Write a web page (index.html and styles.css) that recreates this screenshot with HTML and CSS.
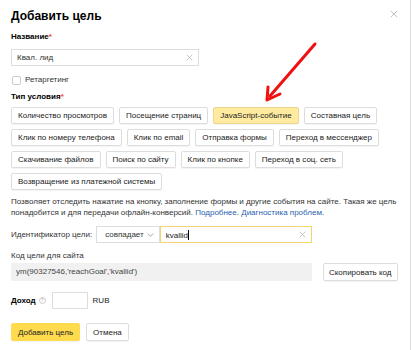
FILE: index.html
```html
<!DOCTYPE html>
<html lang="ru">
<head>
  <meta charset="UTF-8" />
  <title>Добавить цель</title>
  <link rel="stylesheet" href="styles.css">
</head>
<body>
  <div class="dialog">
    <button class="close-btn" aria-label="Закрыть">
      <svg viewBox="0 0 10 10"><path d="M1 1l8 8M9 1l-8 8"/></svg>
    </button>
    <h1>Добавить цель</h1>

    <div class="label">Название<span class="req">*</span></div>
    <div class="input name-input">
      <span>Квал. лид</span>
      <svg class="clear" viewBox="0 0 10 10"><path d="M1 1l8 8M9 1l-8 8"/></svg>
    </div>

    <label class="check"><span class="box"></span>Ретаргетинг</label>

    <div class="label type-label">Тип условия<span class="req">*</span></div>
    <div class="types">
      <button class="btn">Количество просмотров</button>
      <button class="btn">Посещение страниц</button>
      <button class="btn active">JavaScript-событие</button>
      <button class="btn">Составная цель</button>
      <button class="btn">Клик по номеру телефона</button>
      <button class="btn">Клик по email</button>
      <button class="btn">Отправка формы</button>
      <button class="btn">Переход в мессенджер</button>
      <button class="btn">Скачивание файлов</button>
      <button class="btn">Поиск по сайту</button>
      <button class="btn">Клик по кнопке</button>
      <button class="btn">Переход в соц. сеть</button>
      <button class="btn">Возвращение из платежной системы</button>
    </div>

    <p class="hint">Позволяет отследить нажатие на кнопку, заполнение формы и другие события на сайте. Такая же цель<br>понадобится и для передачи офлайн-конверсий. <a href="#">Подробнее</a>. <a href="#">Диагностика проблем</a>.</p>

    <div class="id-row">
      <span class="id-label">Идентификатор цели:</span>
      <div class="select">совпадает <svg viewBox="0 0 10 6"><path d="M1 1l4 4 4-4"/></svg></div>
      <div class="input id-input">
        <span>kvallid<i class="caret"></i></span>
        <svg class="clear" viewBox="0 0 10 10"><path d="M1 1l8 8M9 1l-8 8"/></svg>
      </div>
    </div>

    <div class="sub">Код цели для сайта</div>
    <div class="code-row">
      <div class="code">ym(90327546,'reachGoal','kvallid')</div>
      <button class="btn">Скопировать код</button>
    </div>

    <div class="income">
      <b>Доход</b>
      <span class="q">?</span>
      <div class="input small-input"></div>
      <span>RUB</span>
    </div>

    <div class="actions">
      <button class="btn primary">Добавить цель</button>
      <button class="btn">Отмена</button>
    </div>
  </div>

  <svg class="arrow" viewBox="0 0 412 350">
    <path d="M315 44 L270 96" />
    <path d="M267 100 L268 87 M267 100 L280 94" />
  </svg>
</body>
</html>
```

FILE: styles.css
```css
body {
  margin: 0;
  background: #fff;
  font-family: 'Liberation Sans', Arial, sans-serif;
  font-size: 8px;
  color: #222;
}
.dialog {
  position: relative;
  width: 411px;
  height: 350px;
  box-sizing: border-box;
  border-right: 1px solid #ddd;
  padding: 8px 0 0 11px;
}
h1 {
  margin: 0 0 8px;
  font-size: 12px;
  font-weight: bold;
  line-height: 16px;
  color: #000;
}
.close-btn {
  position: absolute;
  top: 10px;
  left: 390px;
  width: 8px;
  height: 8px;
  padding: 0;
  border: none;
  background: none;
}
.close-btn svg, .clear {
  display: block;
  width: 100%;
  height: 100%;
  stroke: #bbb;
  stroke-width: 1.2;
  fill: none;
}
.label {
  font-weight: bold;
  color: #000;
  line-height: 10px;
}
.req { color: #f33; }
.input {
  display: flex;
  align-items: center;
  justify-content: space-between;
  box-sizing: border-box;
  height: 17px;
  border: 1px solid #ddd;
  padding: 0 5px;
  background: #fff;
}
.input .clear {
  width: 7px;
  height: 7px;
}
.name-input {
  width: 188px;
  margin-top: 7px;
  color: #333;
}
.check {
  display: flex;
  align-items: center;
  gap: 4px;
  margin: 9px 0 0 1px;
  line-height: 10px;
  color: #333;
}
.box {
  width: 7px;
  height: 7px;
  border: 1px solid #ccc;
  border-radius: 2px;
}
.type-label { margin-top: 7px; }
.types {
  display: flex;
  flex-wrap: wrap;
  gap: 5px 5px;
  width: 374px;
  margin-top: 5px;
}
.btn {
  box-sizing: border-box;
  height: 17px;
  padding: 0 6px;
  border: 1px solid #ddd;
  border-radius: 2px;
  background: #fff;
  font-family: inherit;
  font-size: 8px;
  color: #222;
  box-shadow: 0 1px 1px rgba(0,0,0,0.05);
}
.btn.active {
  background: #ffeba0;
  border-color: #eed48e;
}
.hint {
  margin: 6px 0 0;
  white-space: nowrap;
  line-height: 11px;
  color: #333;
}
.hint a {
  color: #2a5fb0;
  text-decoration: none;
}
.id-row {
  display: flex;
  align-items: center;
  margin-top: 8px;
  color: #333;
}
.id-label { margin-right: 4px; }
.select {
  display: flex;
  align-items: center;
  gap: 3px;
  height: 17px;
  box-sizing: border-box;
  border: 1px solid #ddd;
  padding: 0 5px 0 8px;
}
.select svg {
  width: 7px;
  height: 4px;
  stroke: #777;
  fill: none;
}
.id-input {
  width: 152px;
  border-color: #f3d46a;
  color: #222;
}
.caret {
  display: inline-block;
  width: 1px;
  height: 10px;
  background: #000;
  vertical-align: -2px;
}
.sub {
  margin-top: 8px;
  color: #333;
  line-height: 10px;
}
.code-row {
  display: flex;
  align-items: center;
  gap: 11px;
  margin-top: 2px;
}
.code {
  width: 296px;
  height: 18px;
  line-height: 18px;
  padding-left: 5px;
  background: #f1f1f2;
  color: #444;
}
.code-row .btn {
  height: 18px;
  padding: 0 5px;
}
.income {
  display: flex;
  align-items: center;
  margin-top: 11px;
}
.income b { color: #000; }
.q {
  box-sizing: border-box;
  width: 7px;
  height: 7px;
  margin-left: 3px;
  border: 1px solid #ccc;
  border-radius: 50%;
  font-size: 5px;
  line-height: 5px;
  text-align: center;
  color: #bbb;
}
.small-input {
  width: 36px;
  margin: 0 5px 0 6px;
}
.actions {
  display: flex;
  gap: 6px;
  margin-top: 14px;
}
.actions .btn { height: 18px; }
.btn.primary {
  background: #ffdb4d;
  border-color: #ffdb4d;
}
.arrow {
  position: absolute;
  top: 0;
  left: 0;
  width: 412px;
  height: 350px;
  pointer-events: none;
}
.arrow path {
  stroke: #f01010;
  stroke-width: 3;
  fill: none;
  stroke-linecap: round;
  stroke-linejoin: round;
}
```
